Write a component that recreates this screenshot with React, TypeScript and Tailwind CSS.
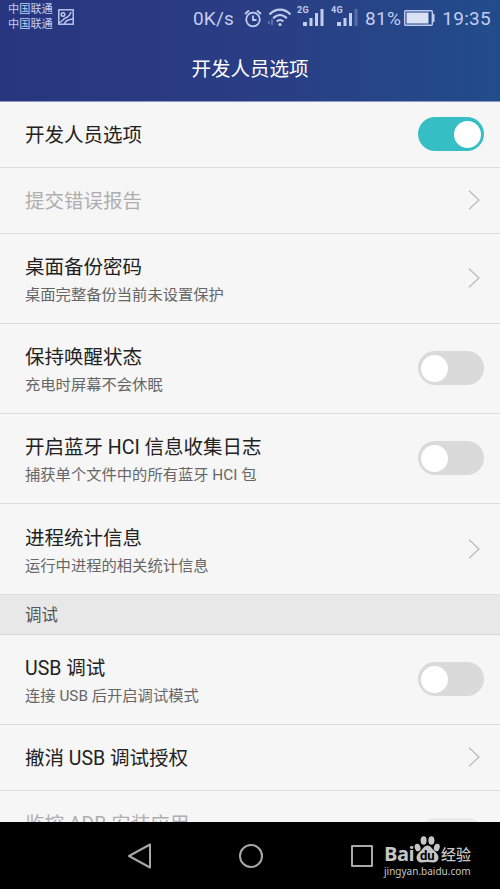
import clsx from "clsx";

type Item = {
  title: string;
  summary?: string;
  control: "on" | "off" | "arrow";
  disabled?: boolean;
  height: string;
};

const general: Item[] = [
  { title: "开发人员选项", control: "on", height: "h-[66px]" },
  { title: "提交错误报告", control: "arrow", disabled: true, height: "h-[66px]" },
  { title: "桌面备份密码", summary: "桌面完整备份当前未设置保护", control: "arrow", height: "h-[90px]" },
  { title: "保持唤醒状态", summary: "充电时屏幕不会休眠", control: "off", height: "h-[90px]" },
  { title: "开启蓝牙 HCI 信息收集日志", summary: "捕获单个文件中的所有蓝牙 HCI 包", control: "off", height: "h-[90px]" },
  { title: "进程统计信息", summary: "运行中进程的相关统计信息", control: "arrow", height: "h-[91px]" },
];

const debugging: Item[] = [
  { title: "USB 调试", summary: "连接 USB 后开启调试模式", control: "off", height: "h-[90px]" },
  { title: "撤消 USB 调试授权", control: "arrow", height: "h-[66px]" },
  // two-line row, scrolled mostly out of view
  { title: "监控 ADB 安装应用", summary: "", control: "off", disabled: true, height: "h-[90px]" },
];

function Toggle({ on, disabled }: { on: boolean; disabled?: boolean }) {
  return (
    <div
      className={clsx(
        "mb-px flex h-[34px] w-[66px] items-center rounded-full px-[3px]",
        on ? "justify-end bg-[#35bfc4]" : "bg-[#dadada]",
        disabled && "opacity-40"
      )}
    >
      <div className="size-[27px] rounded-full bg-white" />
    </div>
  );
}

function Chevron() {
  return (
    <svg className="mr-1 mb-px h-5 w-3" viewBox="0 0 12 20" fill="none" stroke="#b9b9b9" strokeWidth="1.2">
      <path d="M1 .8 11 10 1 19.2" />
    </svg>
  );
}

function Row({ item }: { item: Item }) {
  const twoLines = item.summary !== undefined;
  return (
    <div
      className={clsx(
        "flex shrink-0 items-center justify-between border-b border-[#dcdcdc] pr-4 pl-[25px]",
        item.height
      )}
    >
      <div className={clsx("whitespace-nowrap", twoLines ? "pt-[6px]" : "pt-[3px]")}>
        <div
          className={clsx(
            "text-[19.5px] leading-[28px]",
            item.disabled ? "text-[#aeaeae]" : "text-[#222222]"
          )}
        >
          {item.title}
        </div>
        {twoLines && (
          <div className="h-[27px] text-[15.3px] leading-[27px] text-[#666666]">{item.summary}</div>
        )}
      </div>
      {item.control === "arrow" ? (
        <Chevron />
      ) : (
        <Toggle on={item.control === "on"} disabled={item.disabled} />
      )}
    </div>
  );
}

function Signal({ label, weak }: { label: string; weak?: boolean }) {
  return (
    <svg className="h-6 w-[29px] shrink-0" viewBox="0 0 29 24" fill="#c3cdf0">
      <text x="0" y="9" fontSize="9" fontWeight="700">{label}</text>
      <rect x="6" y="18" width="4" height="4" />
      <rect x="12.5" y="14" width="3" height="8" />
      <rect x="18" y="9" width="3" height="13" />
      <rect x="23.5" y="5" width="3" height="17" opacity={weak ? 0.3 : 1} />
    </svg>
  );
}

function StatusBar() {
  return (
    <div className="flex h-9 items-start justify-between pr-[9px] pl-2 text-[#c3cdf0]">
      <div className="flex">
        <div className="pt-[2px] text-[11.2px] leading-[15px]">
          <div>中国联通</div>
          <div>中国联通</div>
        </div>
        <svg className="mt-[9px] ml-[5px] size-4" viewBox="0 0 16 16" fill="none" stroke="#c3cdf0" strokeWidth="1.4">
          <rect x=".8" y=".8" width="14.4" height="14.4" />
          <circle cx="5" cy="5.5" r="1.8" />
          <path d="M1 13.5C4 13.5 4.5 10 7.5 9S12 6 13 3M6.5 15c.5-3 3-4.500 8.500-5" />
        </svg>
      </div>
      <div className="flex h-9 items-center text-[19px] leading-none tracking-[0.3px]">
        <span className="tracking-[0.2px]">0K/s</span>
        <svg className="ml-[10px] h-[19px] w-[18px]" viewBox="0 0 18 19" fill="none" stroke="#c3cdf0" strokeWidth="1.8">
          <circle cx="9" cy="10.5" r="6.8" />
          <path d="M9 6.5V11h3.500M1 5 5 1.500M17 5l-4-3.500" />
        </svg>
        <svg className="-mt-[2px] ml-[6px] h-5 w-6" viewBox="0 0 24 20" fill="none" stroke="#c3cdf0" strokeWidth="2.2">
          <path d="M1.500 7.500c6-6.500 15-6.500 21 0M5.200 11.200c4-4.300 9.600-4.300 13.600 0M8.800 14.500c2-2 4.400-2 6.400 0" />
          <circle cx="12" cy="17.500" r="1.600" fill="#c3cdf0" stroke="none" />
          <path d="M1 14v3M4 12v6" strokeWidth="1.500" opacity=".45" />
        </svg>
        <div className="-mt-1 ml-[5px] flex gap-[5px]">
          <Signal label="2G" />
          <Signal label="4G" weak />
        </div>
        <span className="ml-[5px]">81%</span>
        <svg className="ml-[3px] h-4 w-8" viewBox="0 0 32 16" fill="#c3cdf0">
          <rect x=".7" y=".7" width="27.6" height="14.6" rx="1" fill="none" stroke="#c3cdf0" strokeWidth="1.4" />
          <rect x="2.5" y="2.5" width="22" height="11" fill="#dbe1f5" />
          <path d="M29 4h1.500v8H29z" />
        </svg>
        <span className="ml-[6px]">19:35</span>
      </div>
    </div>
  );
}

function BaiduMark() {
  return (
    <div className="absolute top-[12px] left-[384px] text-[#c6c6c6]">
      <div className="flex h-8 items-end whitespace-nowrap">
        <span className="mb-[3px] w-[30px] font-['Open_Sans','Noto_Sans',sans-serif] text-[20px] leading-[18px] font-bold tracking-[-0.5px]">
          Bai
        </span>
        <svg className="mb-[2px] h-[30px] w-[27px]" viewBox="0 0 27 30" fill="#c6c6c6">
          <ellipse cx="3.6" cy="13.5" rx="2.9" ry="3.8" transform="rotate(-15 3.6 13.5)" />
          <ellipse cx="9.6" cy="6.5" rx="3" ry="4.2" />
          <ellipse cx="17.4" cy="6.5" rx="3" ry="4.2" />
          <ellipse cx="22.8" cy="13.5" rx="2.9" ry="3.8" transform="rotate(15 22.8 13.5)" />
          <path d="M13.500 11.500c3 0 4.300 3 6.500 5s4.500 4 4.500 7-2.500 5-5.500 5c-2 0-3.500-.4-5.500-.4s-3.500.4-5.500.4c-3 0-5.500-2-5.500-5s2.500-5 4.500-7 3.500-5 6.500-5z" />
          <text x="6" y="26" fontSize="13" fontWeight="700" fill="#000">du</text>
        </svg>
        <span className="pb-[1px] text-[15px] leading-[20px] font-medium">经验</span>
      </div>
      <div className="-mt-px font-['Noto_Sans',sans-serif] text-[10px] leading-[12px]">
        jingyan.baidu.com
      </div>
    </div>
  );
}

export default function App() {
  return (
    <div className="flex h-[889px] w-[500px] flex-col overflow-hidden bg-[#f6f6f6] font-[Roboto,'Noto_Sans_CJK_SC',sans-serif]">
      <header className="h-[102px] shrink-0 border-b border-[#8c99c9] bg-linear-to-r from-[#27367f] via-[#2a3d84] to-[#214c8b]">
        <StatusBar />
        <h1 className="pt-5 text-center text-[19.5px] leading-[28px] text-white">开发人员选项</h1>
      </header>

      <main className="flex h-[720px] shrink-0 flex-col overflow-hidden">
        {general.map((item) => (
          <Row key={item.title} item={item} />
        ))}
        <div className="flex h-10 shrink-0 items-center border-b border-[#d6d6d6] bg-[#e8e8e8] pt-[4px] pl-[25px] text-[16.5px] text-[#555555]">
          调试
        </div>
        {debugging.map((item) => (
          <Row key={item.title} item={item} />
        ))}
      </main>

      {/* navigation keys */}
      <footer className="relative flex h-[67px] shrink-0 items-center justify-center gap-[85px] bg-black pl-[2px]">
        <svg className="size-[26px]" viewBox="0 0 26 26" fill="none" stroke="#a8a8a8" strokeWidth="2" strokeLinejoin="round">
          <path d="M2 13 23 1.500v23z" />
        </svg>
        <svg className="size-[26px]" viewBox="0 0 26 26" fill="none" stroke="#a8a8a8" strokeWidth="2">
          <circle cx="13" cy="13" r="11" />
        </svg>
        <svg className="size-[26px]" viewBox="0 0 26 26" fill="none" stroke="#a8a8a8" strokeWidth="2" strokeLinejoin="round">
          <rect x="3" y="3" width="20" height="20" />
        </svg>
        <BaiduMark />
      </footer>
    </div>
  );
}
